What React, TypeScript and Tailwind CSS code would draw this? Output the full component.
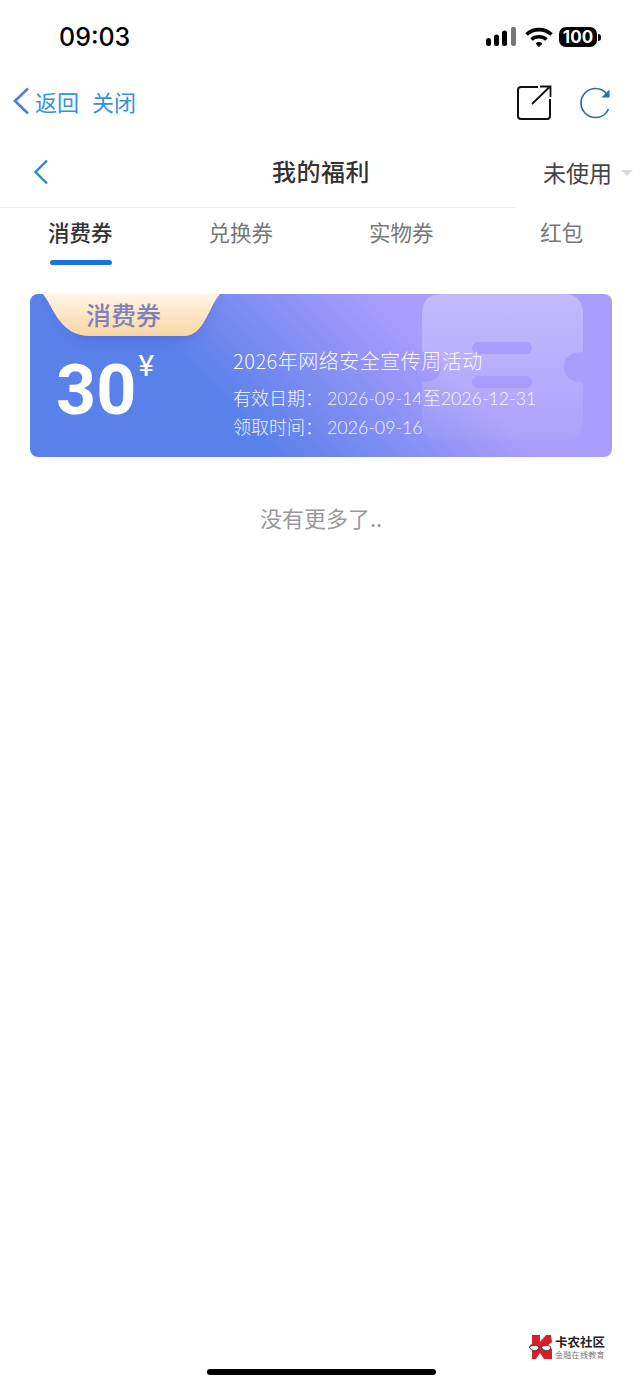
import { ReactNode } from 'react';

const CJK = "font-['Noto_Sans_CJK_SC','Noto_Sans',sans-serif]";

const tabs = [
  { label: '消费券', active: true },
  { label: '兑换券', active: false },
  { label: '实物券', active: false },
  { label: '红包', active: false },
];

function StatusBar() {
  return (
    <div className="h-[72px] flex items-center justify-between pl-[59px] pr-[41px] pt-[2px]">
      <span className="font-['Inter',sans-serif] text-[25px] font-medium text-black leading-none pt-[1px]">09:03</span>
      <div className="flex items-center">
        <svg width="31" height="20" viewBox="0 0 31 20" className="mr-[8px]">
          <rect x="0" y="11" width="5" height="8" rx="2.5" fill="#000" />
          <rect x="8" y="7.5" width="5" height="11.5" rx="2.5" fill="#000" />
          <rect x="16" y="3.5" width="5" height="15.5" rx="2.5" fill="#000" />
          <rect x="25" y="0" width="5" height="19" rx="2" fill="#777" />
        </svg>
        <svg width="28" height="20" viewBox="0 0 28 20" fill="none" stroke="#000" strokeWidth="3.6" className="mr-[6px]">
          <path d="M1.5 7.5C8.5 1 19.5 1 26.5 7.5" />
          <path d="M6.5 12.5C10.5 8.8 17.5 8.8 21.5 12.5" />
          <path d="M11 16.6L14 19.5L17 16.6C15.4 15 12.6 15 11 16.6Z" fill="#000" strokeWidth="1" />
        </svg>
        <div className="flex items-center">
          <div className="w-[38px] h-[20px] rounded-[7px] bg-black flex items-center justify-center font-['Inter',sans-serif] text-[17px] font-bold leading-none text-white">
            100
          </div>
          <div className="w-[3px] h-[7px] rounded-r-[3px] bg-black ml-[1px]" />
        </div>
      </div>
    </div>
  );
}

function NavBar() {
  return (
    <div className={`h-[64px] flex items-center justify-between pl-[12px] pr-[31px] ${CJK}`}>
      <div className="flex items-center text-[22px] text-[#2f95d8] leading-none pb-[6px]">
        <svg width="18" height="28" viewBox="0 0 18 28" fill="none" stroke="#4f7fd0" strokeWidth="2.6" className="mr-[5px]">
          <path d="M16 1.5L3 14L16 26.5" />
        </svg>
        <span>返回</span>
        <span className="ml-[13px]">关闭</span>
      </div>
      <div className="flex items-center gap-[27px] pb-[2px]">
        <svg width="36" height="36" viewBox="0 0 36 36" fill="none" stroke="#111" strokeWidth="2">
          <path d="M22 2H5Q2 2 2 5V31Q2 34 5 34H31Q34 34 34 31V14" />
          <path d="M16 19L33.5 2M24 1.5H34.5V12" strokeWidth="1.8" />
        </svg>
        <svg width="32" height="32" viewBox="0 0 32 32" fill="none" stroke="#2a6ea3" strokeWidth="1.7">
          <path d="M28 7.5C25.5 3.8 21 1.5 16.5 1.5C8.5 1.5 2 8 2 16C2 24 8.5 30.5 16.5 30.5C22.5 30.5 27.5 27 29.5 22" />
          <path d="M30.5 2.5V10.5H22.5Z" fill="#2a6ea3" stroke="none" />
        </svg>
      </div>
    </div>
  );
}

function PageHeader() {
  return (
    <div className={`relative ${CJK}`}>
      <div className="h-[71px] flex items-center justify-center relative pb-[2px]">
        <svg width="16" height="26" viewBox="0 0 16 26" fill="none" stroke="#2a86d8" strokeWidth="2.4" className="absolute left-[33px] top-[23px]">
          <path d="M14 1.5L2.5 13L14 24.5" />
        </svg>
        <span className="text-[24px] font-medium text-[#333] tracking-[0.5px] leading-none">我的福利</span>
      </div>
      <div className="w-[515px] h-px bg-[#eeeeee]" />
      <div className="absolute left-[543px] top-[25px] flex items-center text-[23px] leading-none text-[#444]">
        <span>未使用</span>
        <span className="ml-[9px] w-0 h-0 border-x-[6px] border-x-transparent border-t-[6px] border-t-[#d9d9d9]" />
      </div>
    </div>
  );
}

function Tab({ active, children }: { active: boolean; children: ReactNode }) {
  return (
    <div className="flex flex-col items-center">
      <span className={`text-[21.5px] leading-none mt-[13px] ${active ? 'font-medium text-[#333]' : 'text-[#777]'}`}>{children}</span>
      {active && <div className="w-[62px] h-[5px] rounded-full bg-[#1a75e2] mt-[17px] ml-[2px]" />}
    </div>
  );
}

function VoucherCard() {
  return (
    <div className="relative mx-[30px] w-[582px] h-[163px] rounded-[8px] overflow-hidden bg-[linear-gradient(45deg,#5a80ea_33%,#aa9dfc_68%)]">
      {/* faded ticket shape behind the text */}
      <svg width="162" height="146" viewBox="0 0 162 146" className="absolute left-[392px] top-0">
        <defs>
          <linearGradient id="ticket" x1="0" y1="0" x2="0" y2="1">
            <stop offset="0" stopColor="#ffffff" stopOpacity="0.3" />
            <stop offset="1" stopColor="#ffffff" stopOpacity="0.04" />
          </linearGradient>
        </defs>
        <path
          d="M0 20Q0 0 20 0H141Q161 0 161 20V58C148 58 142 64 142 73C142 82 148 88 161 88V128Q161 146 143 146H18Q0 146 0 128V88C13 88 19 82 19 73C19 64 13 58 0 58Z"
          fill="url(#ticket)"
        />
        <rect x="50" y="48" width="60" height="12" rx="6" fill="#a99cfb" />
        <rect x="50" y="82" width="60" height="12" rx="6" fill="#a99cfb" />
      </svg>

      {/* ribbon */}
      <svg width="200" height="72" viewBox="0 0 200 72" className="absolute left-[8px] top-0">
        <defs>
          <linearGradient id="ribbon" x1="0" y1="0" x2="0" y2="1">
            <stop offset="0" stopColor="#fff6e4" />
            <stop offset="1" stopColor="#f9d5a3" />
          </linearGradient>
          <filter id="ribbonShadow" x="-15%" y="-30%" width="130%" height="180%">
            <feGaussianBlur stdDeviation="6" />
          </filter>
        </defs>
        <path d="M12 0C22 16 28 46 56 46H142C162 46 168 16 178 0Z" fill="#4a4fb8" fillOpacity="0.4" filter="url(#ribbonShadow)" />
        <path d="M5 0C16 14 22 42 52 42H146C166 42 170 14 182 0Z" fill="url(#ribbon)" />
      </svg>
      <span className="absolute left-[56px] top-[8px] text-[25px] font-medium leading-none text-[#8080bd]">消费券</span>

      <div className="relative h-full flex items-start pt-[57px] pl-[26px]">
        <div className="w-[177px] flex items-start">
          <span className="font-['Roboto',sans-serif] text-[70px] font-bold leading-none text-white mt-[4px]">30</span>
          <span className="font-['Roboto',sans-serif] text-[30px] font-normal leading-none text-white ml-[2px]">¥</span>
        </div>
        <div className="text-white/95 font-light">
          <p className="text-[20px] leading-none tracking-[0.5px]">2026年网络安全宣传周活动</p>
          <p className="text-[18px] leading-none mt-[17px] whitespace-nowrap">
            有效日期：<span className="font-['Lato',sans-serif] ml-[4px] text-[17.8px]">2026-09-14</span>至<span className="font-['Lato',sans-serif] text-[17.8px]">2026-12-31</span>
          </p>
          <p className="text-[18px] leading-none mt-[9px]">
            领取时间：<span className="font-['Lato',sans-serif] ml-[4px] text-[17.8px]">2026-09-16</span>
          </p>
        </div>
      </div>
    </div>
  );
}

function CommunityMark() {
  return (
    <div className={`flex items-center justify-end pr-[37px] ${CJK}`}>
      <svg width="24" height="25" viewBox="0 0 24 25" className="mr-[2px]">
        <path d="M3 0H11V7L17 0H22L23 7L18 11L23 14V24H15L11 18L7 24H3V15L1 10L3 9Z" fill="#d3202a" />
        <path d="M0 12C3 10 8 10 10 12C9 17 3 17 0 12ZM12 12C15 10 20 10 22 12C21 17 15 17 12 12Z" fill="#fff" stroke="#222" strokeWidth="0.8" />
      </svg>
      <div className="flex flex-col">
        <span className="text-[12.5px] font-bold leading-none text-[#222]">卡农社区</span>
        <span className="text-[8px] leading-none text-[#777] mt-[2px] tracking-[0.3px] whitespace-nowrap">金融在线教育</span>
      </div>
    </div>
  );
}

export default function App() {
  return (
    <div className={`w-[642px] h-[1389px] bg-white flex flex-col overflow-hidden ${CJK}`}>
      <StatusBar />
      <NavBar />
      <PageHeader />
      <div className="grid grid-cols-4 h-[86px]">
        {tabs.map((t) => (
          <Tab key={t.label} active={t.active}>{t.label}</Tab>
        ))}
      </div>
      <VoucherCard />
      <p className="text-center text-[22px] text-[#999] leading-none mt-[49px]">没有更多了..</p>
      <div className="mt-auto">
        <CommunityMark />
        <div className="w-[229px] h-[6px] rounded-full bg-black mx-auto mt-[9px] mb-[14px]" />
      </div>
    </div>
  );
}
